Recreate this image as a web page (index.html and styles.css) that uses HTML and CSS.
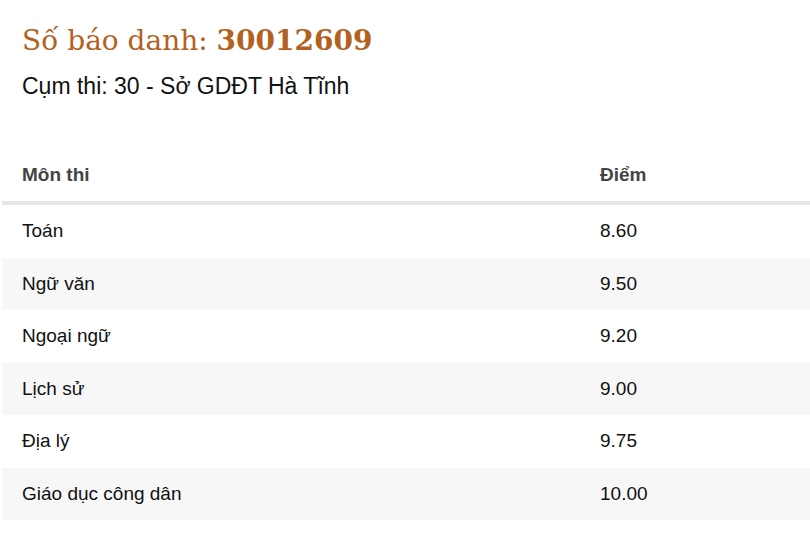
FILE: index.html
```html
<!DOCTYPE html>
<html lang="vi">
<head>
<meta charset="utf-8">
<link rel="stylesheet" href="styles.css">
</head>
<body>
<div class="page">
  <header class="head">
    <h1 class="title">Số báo danh: <strong>30012609</strong></h1>
    <p class="cluster">Cụm thi: 30 - Sở GDĐT Hà Tĩnh</p>
  </header>
  <table class="scores">
    <colgroup><col class="c-subj"><col class="c-score"></colgroup>
    <thead>
      <tr><th>Môn thi</th><th>Điểm</th></tr>
    </thead>
    <tbody>
      <tr><td>Toán</td><td>8.60</td></tr>
      <tr><td>Ngữ văn</td><td>9.50</td></tr>
      <tr><td>Ngoại ngữ</td><td>9.20</td></tr>
      <tr><td>Lịch sử</td><td>9.00</td></tr>
      <tr><td>Địa lý</td><td>9.75</td></tr>
      <tr><td>Giáo dục công dân</td><td>10.00</td></tr>
    </tbody>
  </table>
</div>
</body>
</html>
```
FILE: styles.css
```css
html, body { margin: 0; padding: 0; background: #fff; }
body { font-family: "Liberation Sans", Arial, sans-serif; color: #111; }
.page { padding: 0 0 0 2px; }
.head { padding: 22px 0 0 20px; }
.title {
  margin: 0;
  font-family: "DejaVu Serif", "Liberation Serif", serif;
  font-weight: normal;
  font-size: 28px;
  line-height: 38px;
  color: #b3611f;
}
.title strong { font-weight: bold; }
.cluster { margin: 13px 0 0; font-size: 23px; line-height: 26px; color: #111; }
.scores {
  margin-top: 51px;
  width: 810px;
  table-layout: fixed;
  border-collapse: collapse;
  font-size: 19px;
}
.c-subj { width: 578px; }
.scores th {
  text-align: left;
  font-weight: bold;
  color: #444;
  padding: 14px 20px 15px;
  line-height: 22px;
  border-bottom: 4px solid #e6e6e6;
}
.scores td { padding: 15px 20px; line-height: 22.5px; }
.scores tbody tr:nth-child(even) td { background: #f7f7f7; }
```
